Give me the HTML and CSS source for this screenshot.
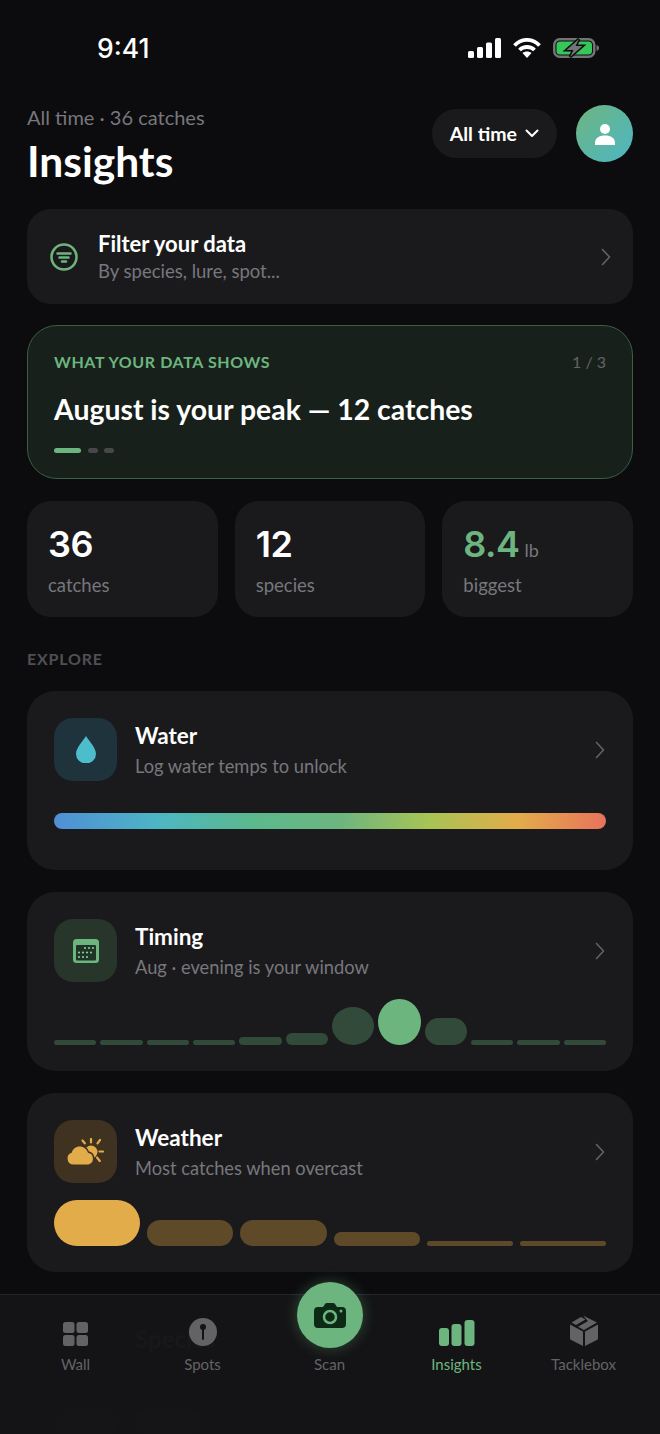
FILE: index.html
```html
<!DOCTYPE html>
<html lang="en">
<head>
    <meta charset="UTF-8">
    <meta name="viewport" content="width=device-width, initial-scale=1.0">
    <title>Insights</title>
    <link rel="stylesheet" href="styles.css">
</head>
<body>
    <div class="status">
        <span class="clock">9:41</span>
        <div class="status-icons">
            <svg width="33" height="20" viewBox="0 0 33 20" fill="#fff"><rect x="0" y="13" width="6" height="7" rx="1.5"/><rect x="9" y="9" width="6" height="11" rx="1.5"/><rect x="18" y="4.500" width="6" height="15.500" rx="1.500"/><rect x="27" y="0" width="6" height="20" rx="1.500"/></svg>
            <svg width="28" height="20" viewBox="0 0 28 20" fill="none" stroke="#fff" stroke-width="3.800"><path d="M1.500 7.500C8.500 0 19.500 0 26.500 7.500"/><path d="M6.500 12C10.500 8 17.500 8 21.500 12"/><path d="M14 20l-4.500-5c2.500-2 6.500-2 9 0z" fill="#fff" stroke="none"/></svg>
            <svg width="46" height="20" viewBox="0 0 46 20"><rect x="1.250" y="1.250" width="40" height="17.500" rx="5.500" fill="none" stroke="#727476" stroke-width="2.500"/><rect x="3.500" y="3.500" width="35.500" height="13" rx="3.500" fill="#35c759"/><path d="M43.500 7c1.500.3 2.500 1.500 2.500 3s-1 2.700-2.500 3z" fill="#727476"/><path d="M26 1L13.500 12h7L17 19l12.500-11h-7z" fill="#727476" stroke="#0c0c0e" stroke-width="3" paint-order="stroke"/></svg>
        </div>
    </div>

    <header class="top">
        <div>
            <div class="top-sub">All time · 36 catches</div>
            <h1>Insights</h1>
        </div>
        <div class="top-actions">
            <div class="pill">All time
                <svg width="14" height="9" viewBox="0 0 14 9" fill="none" stroke="#fff" stroke-width="2" stroke-linecap="round" stroke-linejoin="round"><path d="M1.500 1.500L7 7l5.500-5.500"/></svg>
            </div>
            <div class="avatar">
                <svg width="20" height="22" viewBox="0 0 20 22" fill="#fff"><circle cx="10" cy="6" r="5"/><path d="M0 22v-2c0-5 4-7.500 10-7.500s10 2.500 10 7.500v2z"/></svg>
            </div>
        </div>
    </header>

    <div class="card filter">
        <svg width="28" height="28" viewBox="0 0 28 28" fill="none" stroke="#6db57f" stroke-width="2.500" stroke-linecap="round"><circle cx="14" cy="14" r="12.500"/><path d="M7.500 10.500h13M9.500 14.500h9M12 18.500h4"/></svg>
        <div class="filter-text">
            <div class="filter-title">Filter your data</div>
            <div class="filter-sub">By species, lure, spot...</div>
        </div>
        <svg class="chevron" width="10" height="18" viewBox="0 0 10 18" fill="none" stroke="#636366" stroke-width="1.600" stroke-linecap="round" stroke-linejoin="round"><path d="M1.500 1.500L8.500 9l-7 7.500"/></svg>
    </div>

    <section class="highlight">
        <div class="highlight-top">
            <span class="eyebrow">WHAT YOUR DATA SHOWS</span>
            <span class="count">1 / 3</span>
        </div>
        <div class="highlight-text">August is your peak — 12 catches</div>
        <div class="dots"><i class="dot on"></i><i class="dot"></i><i class="dot"></i></div>
    </section>

    <section class="stats">
        <div class="stat"><div class="num">36</div><div class="label">catches</div></div>
        <div class="stat"><div class="num">12</div><div class="label">species</div></div>
        <div class="stat"><div class="num green">8.4<small>lb</small></div><div class="label">biggest</div></div>
    </section>

    <div class="section-title">EXPLORE</div>

    <section class="card explore">
        <div class="explore-head">
            <div class="icon-box water-box">
                <svg width="20" height="27" viewBox="0 0 20 27" fill="#4dbdcc"><path d="M10 0C7 5 0 11.500 0 18a10 9.500 0 0 0 20 0C20 11.500 13 5 10 0z"/></svg>
            </div>
            <div class="explore-text">
                <div class="explore-title">Water</div>
                <div class="explore-sub">Log water temps to unlock</div>
            </div>
            <svg class="chevron" width="10" height="18" viewBox="0 0 10 18" fill="none" stroke="#636366" stroke-width="1.600" stroke-linecap="round" stroke-linejoin="round"><path d="M1.500 1.500L8.500 9l-7 7.500"/></svg>
        </div>
        <div class="temp-bar"></div>
    </section>

    <section class="card explore">
        <div class="explore-head">
            <div class="icon-box timing-box">
                <svg width="26" height="24" viewBox="0 0 26 24"><rect width="26" height="24" rx="3.500" fill="#6db57f"/><rect x="3" y="6" width="20" height="15.500" rx="1" fill="#1e3526"/><g fill="#8ccb9b"><circle cx="12" cy="9" r="1.100"/><circle cx="16" cy="9" r="1.100"/><circle cx="20" cy="9" r="1.100"/><circle cx="6" cy="13.500" r="1.100"/><circle cx="10" cy="13.500" r="1.100"/><circle cx="14" cy="13.500" r="1.100"/><circle cx="18" cy="13.500" r="1.100"/><circle cx="6" cy="18" r="1.100"/><circle cx="10" cy="18" r="1.100"/><circle cx="14" cy="18" r="1.100"/></g></svg>
            </div>
            <div class="explore-text">
                <div class="explore-title">Timing</div>
                <div class="explore-sub">Aug · evening is your window</div>
            </div>
            <svg class="chevron" width="10" height="18" viewBox="0 0 10 18" fill="none" stroke="#636366" stroke-width="1.600" stroke-linecap="round" stroke-linejoin="round"><path d="M1.500 1.500L8.500 9l-7 7.500"/></svg>
        </div>
        <div class="bars timing-bars">
            <div class="bar" style="height:5px"></div>
            <div class="bar" style="height:5px"></div>
            <div class="bar" style="height:5px"></div>
            <div class="bar" style="height:5px"></div>
            <div class="bar" style="height:8px"></div>
            <div class="bar" style="height:12px"></div>
            <div class="bar" style="height:38px"></div>
            <div class="bar peak" style="height:46px"></div>
            <div class="bar" style="height:27px"></div>
            <div class="bar" style="height:5px"></div>
            <div class="bar" style="height:5px"></div>
            <div class="bar" style="height:5px"></div>
        </div>
    </section>

    <section class="card explore">
        <div class="explore-head">
            <div class="icon-box weather-box">
                <svg width="37" height="27" viewBox="0 0 37 27" fill="#e3ac4a"><circle cx="24" cy="14" r="6.500"/><g stroke="#e3ac4a" stroke-width="2.200" stroke-linecap="round"><path d="M24 1v3.500M15.500 2.500l2.300 2.800M33 2l-2.500 3.300M32.500 13.500H36M30 19.500l2.800 3.500"/></g><path d="M6.500 26.500a6 6 0 0 1-1.800-11.700C5.500 11 9 8.500 12.500 8.500c4 0 7.500 2.500 8.500 6.300a6 6 0 0 1 .5 11.700z" stroke="#3f3220" stroke-width="3" paint-order="stroke"/></svg>
            </div>
            <div class="explore-text">
                <div class="explore-title">Weather</div>
                <div class="explore-sub">Most catches when overcast</div>
            </div>
            <svg class="chevron" width="10" height="18" viewBox="0 0 10 18" fill="none" stroke="#636366" stroke-width="1.600" stroke-linecap="round" stroke-linejoin="round"><path d="M1.500 1.500L8.500 9l-7 7.500"/></svg>
        </div>
        <div class="bars weather-bars">
            <div class="bar peak" style="height:46px"></div>
            <div class="bar" style="height:26px"></div>
            <div class="bar" style="height:26px"></div>
            <div class="bar" style="height:14px"></div>
            <div class="bar" style="height:5px"></div>
            <div class="bar" style="height:5px"></div>
        </div>
    </section>

    <nav class="tabs">
        <span class="ghost">Species</span>
        <div class="ghost-row"><i></i><i></i></div>
        <div class="tab">
            <svg class="tab-icon" width="25" height="24" viewBox="0 0 25 24" fill="#636366"><rect width="11.500" height="11" rx="2.500"/><rect x="13.500" width="11.500" height="11" rx="2.500"/><rect y="13" width="11.500" height="11" rx="2.500"/><rect x="13.500" y="13" width="11.500" height="11" rx="2.500"/></svg>
            <span>Wall</span>
        </div>
        <div class="tab">
            <svg class="tab-icon" width="28" height="28" viewBox="0 0 28 28"><circle cx="14" cy="14" r="14" fill="#636366"/><circle cx="14" cy="9" r="3" fill="#141416"/><path d="M14 9v12" stroke="#141416" stroke-width="2" stroke-linecap="round"/></svg>
            <span>Spots</span>
        </div>
        <div class="tab scan">
            <div class="scan-btn">
                <svg width="32" height="25" viewBox="0 0 32 25" fill="#0d2a17"><path d="M4 4h5l2-3c.4-.6 1-1 1.800-1h6.400c.8 0 1.400.4 1.800 1l2 3h5a4 4 0 0 1 4 4v13a4 4 0 0 1-4 4H4a4 4 0 0 1-4-4V8a4 4 0 0 1 4-4z"/><circle cx="16" cy="14" r="6" fill="none" stroke="#6db57f" stroke-width="2.500"/><circle cx="27" cy="8" r="1.500" fill="#6db57f"/></svg>
            </div>
            <span>Scan</span>
        </div>
        <div class="tab active">
            <svg class="tab-icon" width="36" height="26" viewBox="0 0 36 26" fill="#6db57f"><rect y="8" width="10" height="18" rx="3"/><rect x="12.500" y="4" width="10" height="22" rx="3"/><rect x="25.500" width="10" height="26" rx="3"/></svg>
            <span>Insights</span>
        </div>
        <div class="tab">
            <svg class="tab-icon" width="28" height="30" viewBox="0 0 28 30" fill="#636366"><path d="M13 15.500L0 8.500v14c0 .5.300 1 .7 1.200L13 30zM15 15.500L28 8.500v14c0 .5-.3 1-.7 1.200L15 30z"/><path d="M11 1L1.500 6.500 6 9l9.500-5.500zM13.500 0.300c.4-.2.700-.2 1 0L27 6.500 14 14 8 10.700l10-5.700z" /></svg>
            <span>Tacklebox</span>
        </div>
    </nav>
</body>
</html>
```

FILE: styles.css
```css
* {
    box-sizing: border-box;
}
html, body {
    height: 1434px;
    overflow: hidden;
}
body {
    margin: 0;
    background: #0c0c0e;
    color: #fff;
    font-family: Lato, "Noto Sans", sans-serif;
}
.status {
    display: flex;
    justify-content: space-between;
    align-items: center;
    height: 96px;
    padding: 0 61px 0 97px;
}
.clock {
    font-family: Inter, sans-serif;
    font-size: 26.500px;
    font-weight: 500;
}
.status-icons {
    display: flex;
    gap: 12px;
    align-items: center;
}
.top {
    display: flex;
    justify-content: space-between;
    align-items: flex-start;
    padding: 0 27px;
    height: 113px;
}
.top-sub {
    margin-top: 9px;
    font-size: 20px;
    color: #77777c;
    line-height: 24px;
}
h1 {
    margin: 8px 0 0;
    font-size: 42.500px;
    line-height: 48px;
    font-weight: 700;
}
.top-actions {
    display: flex;
    align-items: center;
    gap: 19px;
    margin-top: 9px;
}
.pill {
    display: flex;
    align-items: center;
    gap: 8px;
    height: 49px;
    padding: 0 18px;
    border-radius: 25px;
    background: #1a1a1c;
    font-size: 19.500px;
    font-weight: 700;
}
.avatar {
    display: flex;
    align-items: center;
    justify-content: center;
    width: 57px;
    height: 57px;
    border-radius: 50%;
    background: linear-gradient(135deg, #6db57f, #4db6c4);
}
.card {
    margin: 0 27px;
    background: #1a1a1c;
    border-radius: 24px;
}
.filter {
    display: flex;
    align-items: center;
    height: 95px;
    padding: 0 21px 0 23px;
}
.filter-text {
    flex: 1;
    margin-left: 20px;
}
.filter-title {
    font-size: 22px;
    font-weight: 700;
    line-height: 26px;
}
.filter-sub {
    font-size: 18.500px;
    color: #77777c;
    line-height: 24px;
    margin-top: 2px;
}
.highlight {
    height: 154px;
    margin: 21px 27px 0;
    padding: 26px 26px 0;
    border: 1px solid #3a5f42;
    border-radius: 30px;
    background: #18201b;
}
.highlight-top {
    display: flex;
    justify-content: space-between;
    align-items: center;
}
.eyebrow {
    font-size: 16px;
    font-weight: 700;
    letter-spacing: 0.600px;
    color: #6db57f;
}
.count {
    font-size: 16px;
    color: #636366;
}
.highlight-text {
    margin-top: 21px;
    font-size: 28.400px;
    font-weight: 700;
    line-height: 34px;
}
.dots {
    display: flex;
    gap: 6.500px;
    margin-top: 22px;
}
.dot {
    width: 10px;
    height: 5px;
    border-radius: 3px;
    background: #48484a;
}
.dot.on {
    width: 27px;
    background: #6db57f;
}
.stats {
    display: grid;
    grid-template-columns: repeat(3, 1fr);
    gap: 17px;
    margin: 22px 27px 0;
}
.stat {
    height: 116px;
    padding: 21px 21px 0;
    background: #1a1a1c;
    border-radius: 24px;
}
.num {
    height: 44px;
    font-family: Inter, sans-serif;
    font-size: 36px;
    font-weight: 600;
    line-height: 44px;
    letter-spacing: -0.500px;
}
.num.green {
    color: #6db57f;
}
.num small {
    margin-left: 5px;
    font-family: Lato, sans-serif;
    font-size: 18px;
    font-weight: 400;
    letter-spacing: 0;
    color: #77777c;
}
.label {
    margin-top: 7px;
    font-size: 18.500px;
    color: #77777c;
    line-height: 24px;
}
.section-title {
    margin: 32px 27px 0;
    font-size: 16px;
    font-weight: 700;
    letter-spacing: 0.800px;
    color: #505054;
    line-height: 20px;
}
.explore {
    height: 179px;
    margin-top: 22px;
    padding: 27px 27px 0;
    border-radius: 28px;
}
.explore-head {
    display: flex;
    align-items: center;
}
.icon-box {
    display: flex;
    align-items: center;
    justify-content: center;
    width: 63px;
    height: 63px;
    border-radius: 19px;
}
.water-box {
    background: #1f333c;
}
.timing-box {
    background: #27352b;
}
.weather-box {
    background: #3f3220;
}
.explore-text {
    flex: 1;
    margin-left: 18px;
}
.explore-title {
    font-size: 22.500px;
    font-weight: 700;
    line-height: 28px;
}
.explore-sub {
    margin-top: 4px;
    font-size: 18.300px;
    color: #77777c;
    line-height: 24px;
}
.chevron {
    margin-right: 1px;
}
.temp-bar {
    height: 16px;
    margin-top: 32px;
    border-radius: 8px;
    background: linear-gradient(90deg, #4f8fd6, #4db6c4 19%, #5bb98c 36%, #6db57f 52%, #a8c455 68%, #e3ac4a 84%, #e8735c);
}
.bars {
    display: flex;
    align-items: flex-end;
}
.timing-bars {
    gap: 4px;
    margin-top: 17px;
    height: 46px;
}
.weather-bars {
    gap: 7px;
    height: 46px;
    margin-top: 17px;
}
.bar {
    flex: 1;
    border-radius: 14px;
}
.timing-bars .bar {
    background: #324a39;
}
.timing-bars .bar.peak {
    background: #6db57f;
    border-radius: 50%;
}
.timing-bars .bar:nth-child(7) {
    border-radius: 50%;
}
.weather-bars .bar {
    background: #5e4a29;
    border-radius: 20px;
}
.weather-bars .bar.peak {
    background: #e3ac4a;
    border-radius: 24px;
}
.tabs {
    position: relative;
    display: grid;
    grid-template-columns: repeat(5, 127px);
    height: 140px;
    margin-top: 22px;
    padding: 0 12px;
    border-top: 1px solid #26262a;
    background: #141416;
}
.ghost {
    position: absolute;
    left: 135px;
    top: 29px;
    font-size: 24px;
    font-weight: 700;
    color: #18181a;
}
.ghost-row {
    position: absolute;
    left: 54px;
    top: 112px;
    display: flex;
    gap: 15px;
}
.ghost-row i {
    width: 66px;
    height: 28px;
    border-radius: 12px;
    background: #151517;
}
.tab {
    position: relative;
    display: flex;
    flex-direction: column;
    align-items: center;
    justify-content: flex-end;
    height: 79px;
    font-size: 15px;
    color: #636366;
}
.tab-icon {
    margin-bottom: 8px;
}
.tab span {
    line-height: 20px;
}
.tab.active {
    color: #6db57f;
}
.scan-btn {
    position: absolute;
    top: -13px;
    display: flex;
    align-items: center;
    justify-content: center;
    width: 66px;
    height: 66px;
    border-radius: 50%;
    background: #6db57f;
    box-shadow: 0 0 14px rgba(109, 181, 127, 0.35);
}
```
